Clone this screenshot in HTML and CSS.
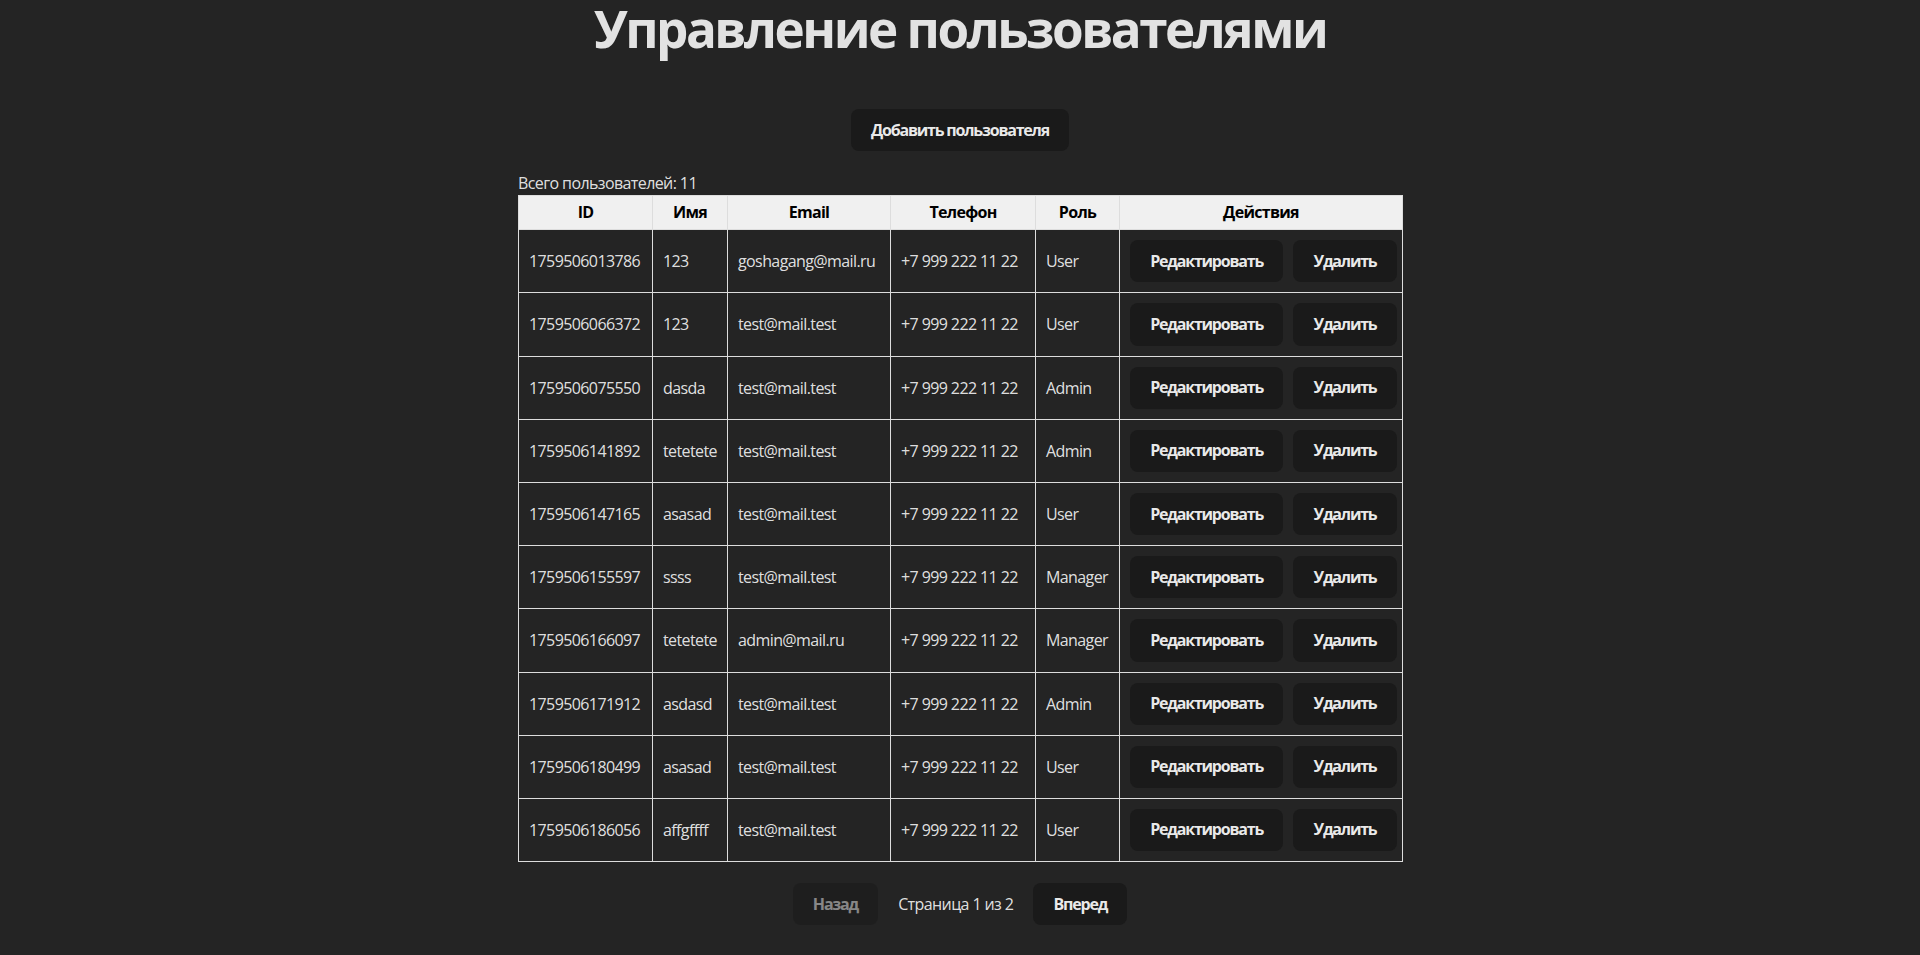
FILE: index.html
```html
<!DOCTYPE html>
<html lang="ru">
<head>
<meta charset="utf-8">
<title>Управление пользователями</title>
<link rel="stylesheet" href="styles.css">
</head>
<body>
<div class="app">
  <h1 class="title">Управление пользователями</h1>
  <div class="toolbar">
    <button class="btn">Добавить пользователя</button>
  </div>
  <div class="total">Всего пользователей: 11</div>
  <table class="users">
    <colgroup>
      <col class="c-id"><col class="c-name"><col class="c-email"><col class="c-phone"><col class="c-role"><col class="c-actions">
    </colgroup>
    <thead>
      <tr><th>ID</th><th>Имя</th><th>Email</th><th>Телефон</th><th>Роль</th><th>Действия</th></tr>
    </thead>
    <tbody>
      <tr><td>1759506013786</td><td>123</td><td>goshagang@mail.ru</td><td>+7 999 222 11 22</td><td>User</td><td><div class="actions"><button class="btn">Редактировать</button><button class="btn">Удалить</button></div></td></tr>
      <tr><td>1759506066372</td><td>123</td><td>test@mail.test</td><td>+7 999 222 11 22</td><td>User</td><td><div class="actions"><button class="btn">Редактировать</button><button class="btn">Удалить</button></div></td></tr>
      <tr><td>1759506075550</td><td>dasda</td><td>test@mail.test</td><td>+7 999 222 11 22</td><td>Admin</td><td><div class="actions"><button class="btn">Редактировать</button><button class="btn">Удалить</button></div></td></tr>
      <tr><td>1759506141892</td><td>tetetete</td><td>test@mail.test</td><td>+7 999 222 11 22</td><td>Admin</td><td><div class="actions"><button class="btn">Редактировать</button><button class="btn">Удалить</button></div></td></tr>
      <tr><td>1759506147165</td><td>asasad</td><td>test@mail.test</td><td>+7 999 222 11 22</td><td>User</td><td><div class="actions"><button class="btn">Редактировать</button><button class="btn">Удалить</button></div></td></tr>
      <tr><td>1759506155597</td><td>ssss</td><td>test@mail.test</td><td>+7 999 222 11 22</td><td>Manager</td><td><div class="actions"><button class="btn">Редактировать</button><button class="btn">Удалить</button></div></td></tr>
      <tr><td>1759506166097</td><td>tetetete</td><td>admin@mail.ru</td><td>+7 999 222 11 22</td><td>Manager</td><td><div class="actions"><button class="btn">Редактировать</button><button class="btn">Удалить</button></div></td></tr>
      <tr><td>1759506171912</td><td>asdasd</td><td>test@mail.test</td><td>+7 999 222 11 22</td><td>Admin</td><td><div class="actions"><button class="btn">Редактировать</button><button class="btn">Удалить</button></div></td></tr>
      <tr><td>1759506180499</td><td>asasad</td><td>test@mail.test</td><td>+7 999 222 11 22</td><td>User</td><td><div class="actions"><button class="btn">Редактировать</button><button class="btn">Удалить</button></div></td></tr>
      <tr><td>1759506186056</td><td>affgffff</td><td>test@mail.test</td><td>+7 999 222 11 22</td><td>User</td><td><div class="actions"><button class="btn">Редактировать</button><button class="btn">Удалить</button></div></td></tr>
    </tbody>
  </table>
  <div class="pagination">
    <button class="btn" disabled>Назад</button>
    <span class="page-info">Страница 1 из 2</span>
    <button class="btn">Вперед</button>
  </div>
</div>
</body>
</html>
```

FILE: styles.css
```css
html, body {
  margin: 0;
  padding: 0;
}

body {
  background-color: #242424;
  color: rgba(255, 255, 255, 0.87);
  font-family: "Open Sans", "Noto Sans", sans-serif;
  font-size: 16px;
  line-height: 1.5;
  font-weight: 400;
  letter-spacing: -0.6px;
}

.app {
  width: 884px;
  margin: 0 auto;
}

.title {
  margin: 0 -200px;
  font-size: 51.2px;
  line-height: 56px;
  font-weight: 700;
  letter-spacing: -2.5px;
  text-align: center;
  color: rgba(255, 255, 255, 0.87);
}

.toolbar {
  display: flex;
  justify-content: center;
  margin-top: 53px;
  margin-bottom: 20px;
}

.btn {
  border-radius: 8px;
  border: 1px solid transparent;
  padding: 9.6px 19.2px;
  font-size: 16px;
  line-height: 21px;
  font-weight: 700;
  letter-spacing: -1.2px;
  font-family: inherit;
  background-color: #1a1a1a;
  color: rgba(255, 255, 255, 0.92);
  cursor: pointer;
}

.btn:disabled {
  opacity: 0.5;
  cursor: not-allowed;
}

.total {
  line-height: 24px;
  text-align: left;
}

.users {
  width: 884px;
  border-collapse: collapse;
  table-layout: fixed;
}

.c-id { width: 134px; }
.c-name { width: 75px; }
.c-email { width: 163px; }
.c-phone { width: 145px; }
.c-role { width: 84px; }
.c-actions { width: 283px; }

.users th,
.users td {
  border: 1px solid #ddd;
  padding: 10px;
  white-space: nowrap;
}

.users th {
  padding: 5px 10px;
  line-height: 23px;
  background-color: #f0f0f0;
  color: #000;
  font-weight: 700;
  letter-spacing: -0.7px;
  text-align: center;
}

.users td {
  text-align: left;
  vertical-align: middle;
}

.actions {
  display: flex;
  gap: 10px;
}

.pagination {
  display: flex;
  justify-content: center;
  align-items: center;
  gap: 20px;
  margin-top: 21px;
}
```
